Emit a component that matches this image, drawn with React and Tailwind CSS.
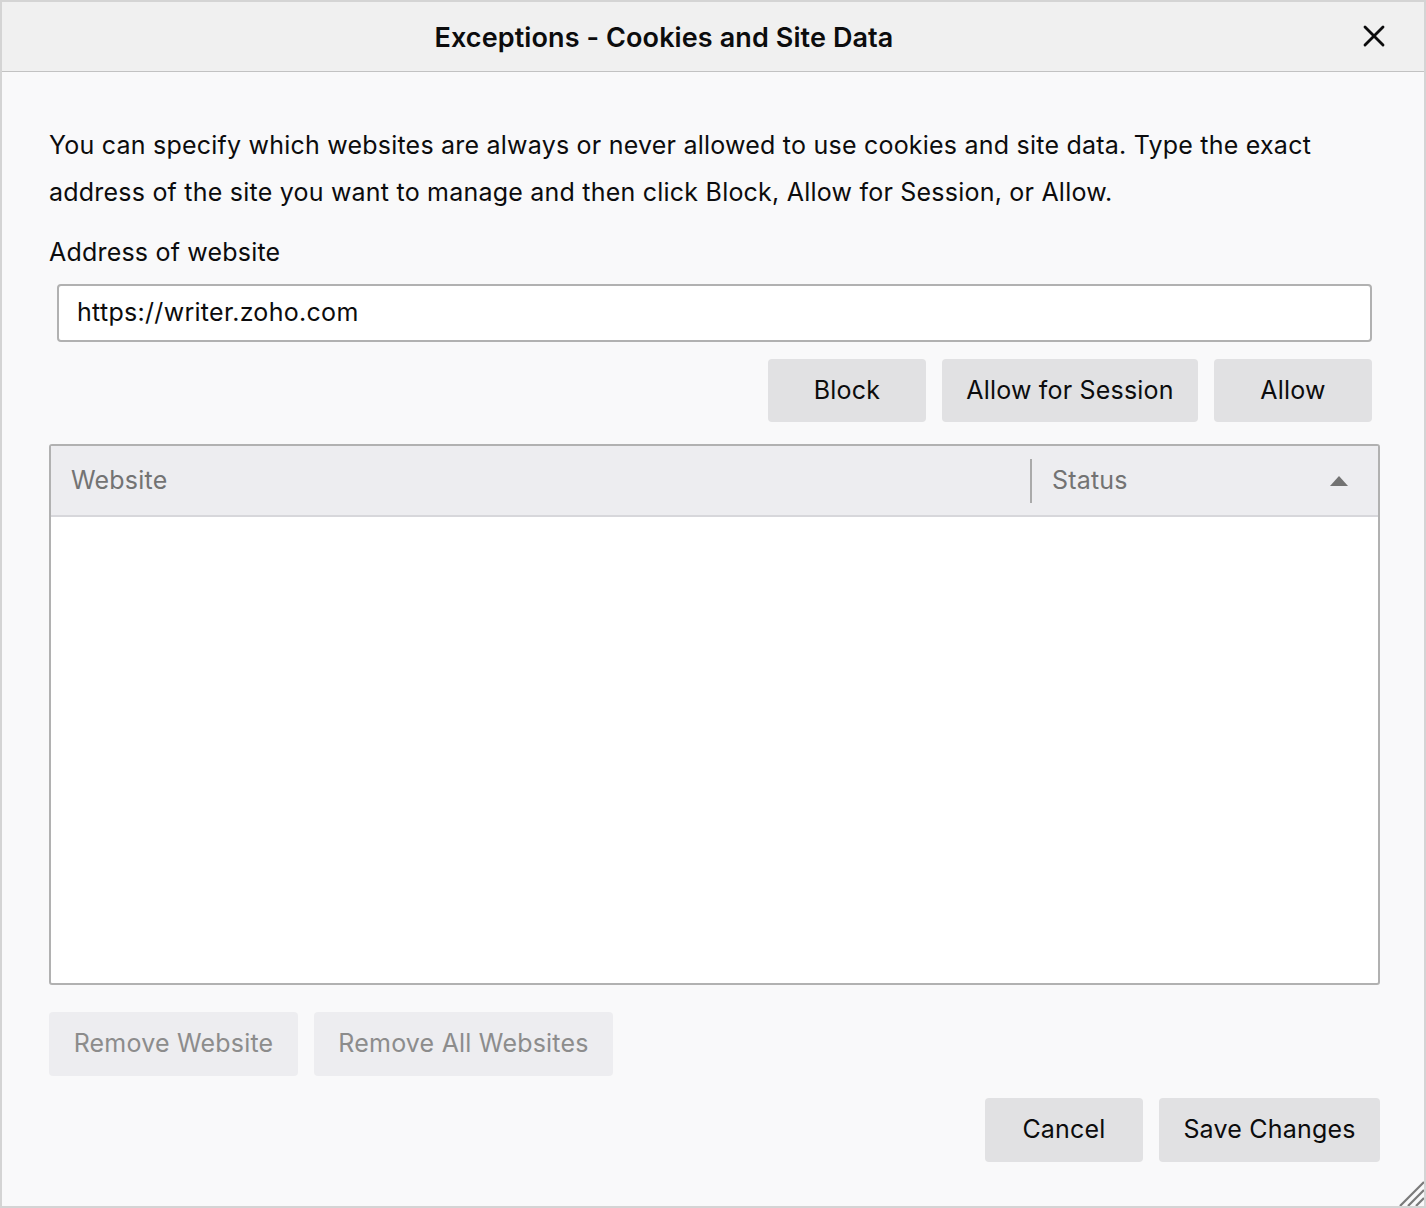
import { X } from 'lucide-react'

const FONT = { fontFamily: 'Inter, "Open Sans", "Liberation Sans", sans-serif' }

function Button({ children, width, disabled }) {
  return (
    <button
      className={`h-[63px] rounded-[4px] text-[25px] tracking-[0.2px] ${
        disabled ? 'bg-[#ededf0] text-[#8c8c8c]' : 'bg-[#e1e1e3] text-[#0c0c0d]'
      } ${width}`}
    >
      {children}
    </button>
  )
}

export default function App() {
  return (
    <div
      className="w-[1426px] h-[1208px] border-2 border-[#d4d4d4] bg-[#f9f9fa] flex flex-col relative overflow-hidden"
      style={FONT}
    >
      {/* Title bar */}
      <header className="h-[70px] shrink-0 bg-[#f0f0f0] border-b border-[#c2c2c2] flex items-center justify-center pr-[98px] pt-[3px] relative">
        <h1 className="text-[27px] font-semibold text-[#0c0c0d] tracking-[0.1px]">
          Exceptions - Cookies and Site Data
        </h1>
        <button className="absolute right-[32px] top-[16px] text-[#0c0c0d]">
          <X size={36} strokeWidth={1.9} />
        </button>
      </header>

      <div className="flex-1 flex flex-col pl-[47px] pr-[44px] pt-[50px] text-[#0c0c0d]">
        <p className="text-[25px] leading-[47px] tracking-[0.22px]">
          You can specify which websites are always or never allowed to use cookies and site data. Type the exact address of the site you want to manage and then click Block, Allow for Session, or Allow.
        </p>
        <label className="mt-[13px] text-[25px] leading-[47px] tracking-[0.2px]">Address of website</label>

        <div className="mt-[8px] ml-[8px] mr-[8px] h-[58px] rounded-[4px] border-2 border-[#b1b1b1] bg-white flex items-center px-[18px] text-[25px] tracking-[0.3px]">
          https://writer.zoho.com
        </div>

        <div className="mt-[17px] mr-[8px] flex justify-end gap-[16px]">
          <Button width="w-[158px]">Block</Button>
          <Button width="w-[256px]">Allow for Session</Button>
          <Button width="w-[158px]">Allow</Button>
        </div>

        {/* Exceptions list */}
        <div className="mt-[22px] h-[541px] rounded-[3px] border-2 border-[#b1b1b1] bg-white flex flex-col">
          <div className="h-[71px] shrink-0 bg-[#ededf0] border-b-2 border-[#d7d7db] flex items-center text-[25px] tracking-[0.2px] text-[#737373]">
            <div className="flex-1 pl-[20px]">Website</div>
            <div className="w-[2px] h-[44px] bg-[#aaaaaa]" />
            <div className="w-[346px] pl-[20px] pr-[30px] flex items-center justify-between">
              <span>Status</span>
              <svg width="18" height="10" viewBox="0 0 18 10">
                <path d="M9 0 L18 10 L0 10 Z" fill="#737373" />
              </svg>
            </div>
          </div>
          <div className="flex-1" />
        </div>

        <div className="mt-[27px] flex gap-[16px]">
          <Button width="w-[249px] h-[64px]" disabled>Remove Website</Button>
          <Button width="w-[299px] h-[64px]" disabled>Remove All Websites</Button>
        </div>

        <div className="mt-[22px] flex justify-end gap-[16px]">
          <Button width="w-[158px] h-[64px]">Cancel</Button>
          <Button width="w-[221px] h-[64px]">Save Changes</Button>
        </div>
      </div>

      {/* Resize grip */}
      <svg className="absolute right-0 bottom-0" width="26" height="26" viewBox="0 0 26 26">
        <path d="M26 2 L2 26 M26 10 L10 26 M26 18 L18 26" stroke="#7a7a7a" strokeWidth="2.2" />
      </svg>
    </div>
  )
}
